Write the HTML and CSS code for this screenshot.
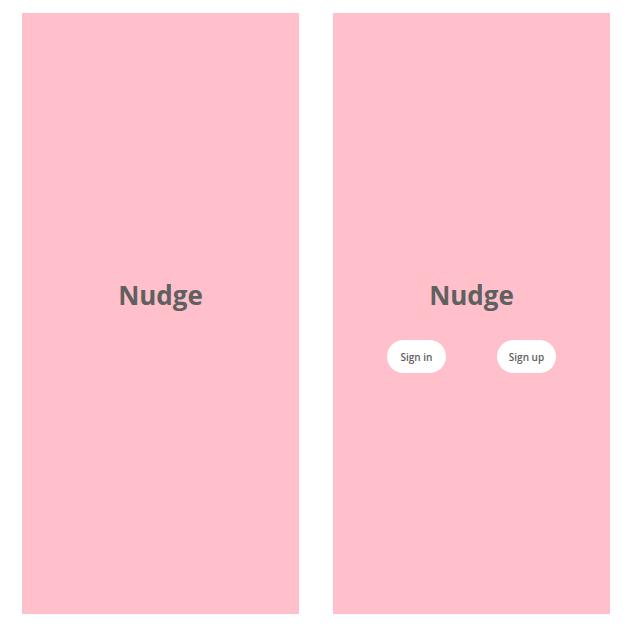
FILE: index.html
```html
<!DOCTYPE html>
<html>
<head>
<meta charset="utf-8">
<link rel="stylesheet" href="styles.css">
</head>
<body>
<div class="screens">
  <section class="panel">
    <h1 class="title">Nudge</h1>
  </section>
  <section class="panel">
    <h1 class="title">Nudge</h1>
    <div class="actions">
      <button class="btn">Sign in</button>
      <button class="btn">Sign up</button>
    </div>
  </section>
</div>
</body>
</html>
```
FILE: styles.css
```css
html, body {
  margin: 0;
  padding: 0;
  background: #ffffff;
}
body {
  font-family: "Open Sans", "Lato", sans-serif;
}
.screens {
  display: flex;
  gap: 34px;
  padding: 13px 0 0 22px;
}
.panel {
  width: 277px;
  height: 601px;
  background: #ffc0cb;
  display: flex;
  flex-direction: column;
  align-items: center;
  padding-top: 266px;
  box-sizing: border-box;
}
.title {
  margin: 0;
  font-size: 26px;
  line-height: 32px;
  font-weight: 700;
  color: #606060;
}
.actions {
  display: flex;
  gap: 51px;
  margin-top: 29px;
}
.btn {
  width: 59px;
  height: 33px;
  border: none;
  border-radius: 17px;
  background: #ffffff;
  color: #606060;
  font-family: "Open Sans", sans-serif;
  font-size: 10px;
  font-weight: 600;
  padding: 0;
}
```
